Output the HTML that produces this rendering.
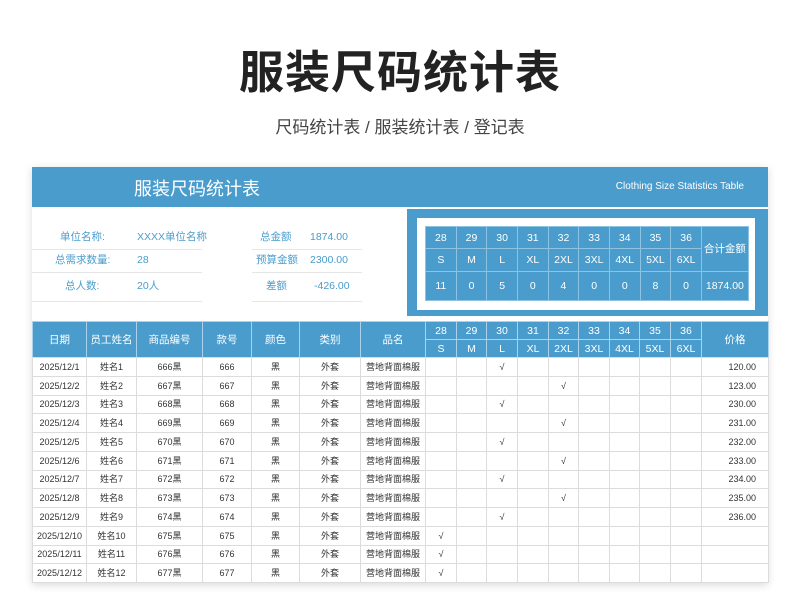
<!DOCTYPE html>
<html><head><meta charset="utf-8"><style>
*{margin:0;padding:0;box-sizing:border-box}
body{width:800px;height:613px;background:#fff;font-family:"Liberation Sans","Noto Sans CJK SC",sans-serif;position:relative;overflow:hidden}
.t{position:absolute;left:0;width:800px;text-align:center}
#card{position:absolute;left:32px;top:167px;width:736px;height:416px;background:#fff;box-shadow:0 2px 8px rgba(0,0,0,.15)}
#hd{position:absolute;left:0;top:0;width:736px;height:40px;background:#4a9ccd;color:#fff}
.info{position:absolute;font-size:10.5px;color:#4a9ccd;line-height:14px}
table{border-collapse:collapse;table-layout:fixed;position:absolute}
td{text-align:center;overflow:hidden;white-space:nowrap;line-height:12px}
#st td{border:1px solid #8cc3e3;color:#fff;background:#4a9ccd;font-size:10.5px}
#mh td{border:1px solid #a9d2ec;color:#fff;background:#4a9ccd;font-size:10.5px}
#bd td{border:1px solid #dcdcdc;color:#333;font-size:9px;height:18.75px}
</style></head><body>
<div class="t" style="top:36px;font-size:45px;font-weight:bold;color:#222;letter-spacing:1px">服装尺码统计表</div>
<div class="t" style="top:113px;font-size:17px;color:#444">尺码统计表 / 服装统计表 / 登记表</div>
<div id="card">
<div id="hd"><div style="position:absolute;left:102px;top:8px;font-size:18px">服装尺码统计表</div><div style="position:absolute;right:24px;top:14px;font-size:10px">Clothing Size Statistics Table</div></div>
<div style="position:absolute;left:0;top:82px;width:170px;border-top:1px solid #e6e6e6"></div>
<div style="position:absolute;left:0;top:105px;width:170px;border-top:1px solid #e6e6e6"></div>
<div style="position:absolute;left:0;top:134px;width:170px;border-top:1px solid #e6e6e6"></div>
<div style="position:absolute;left:220px;top:82px;width:110px;border-top:1px solid #e6e6e6"></div>
<div style="position:absolute;left:220px;top:105px;width:110px;border-top:1px solid #e6e6e6"></div>
<div style="position:absolute;left:220px;top:134px;width:110px;border-top:1px solid #e6e6e6"></div>
<div class="info" style="left:28px;top:63px">单位名称:</div><div class="info" style="left:105px;top:63px">XXXX单位名称</div>
<div class="info" style="left:23px;top:86px">总需求数量:</div><div class="info" style="left:105px;top:86px">28</div>
<div class="info" style="left:33px;top:112px">总人数:</div><div class="info" style="left:105px;top:112px">20人</div>
<div class="info" style="left:228px;top:63px">总金额</div><div class="info" style="left:278px;top:63px">1874.00</div>
<div class="info" style="left:224px;top:86px">预算金额</div><div class="info" style="left:278px;top:86px">2300.00</div>
<div class="info" style="left:234px;top:112px">差额</div><div class="info" style="left:282px;top:112px">-426.00</div>
<div style="position:absolute;left:375px;top:42px;width:361px;height:107px;background:#4a9ccd"></div>
<div style="position:absolute;left:385px;top:51px;width:338px;height:92px;background:#fff"></div>
<table id="st" style="left:393px;top:59px;width:323px">
<colgroup><col span="9" style="width:30.67px"><col style="width:47px"></colgroup>
<tr style="height:22px"><td>28</td><td>29</td><td>30</td><td>31</td><td>32</td><td>33</td><td>34</td><td>35</td><td>36</td><td rowspan="2">合计金额</td></tr>
<tr style="height:23px"><td>S</td><td>M</td><td>L</td><td>XL</td><td>2XL</td><td>3XL</td><td>4XL</td><td>5XL</td><td>6XL</td></tr>
<tr style="height:29px"><td>11</td><td>0</td><td>5</td><td>0</td><td>4</td><td>0</td><td>0</td><td>8</td><td>0</td><td>1874.00</td></tr>
</table>
<table id="mh" style="left:0;top:154px;width:736px">
<colgroup><col style="width:54px"><col style="width:50px"><col style="width:66px"><col style="width:49px"><col style="width:48px"><col style="width:61px"><col style="width:65px"><col style="width:31px"><col style="width:30px"><col style="width:31px"><col style="width:31px"><col style="width:30px"><col style="width:31px"><col style="width:30px"><col style="width:31px"><col style="width:31px"><col style="width:67px"></colgroup>
<tr style="height:18px"><td rowspan="2">日期</td><td rowspan="2">员工姓名</td><td rowspan="2">商品编号</td><td rowspan="2">款号</td><td rowspan="2">颜色</td><td rowspan="2">类别</td><td rowspan="2">品名</td><td>28</td><td>29</td><td>30</td><td>31</td><td>32</td><td>33</td><td>34</td><td>35</td><td>36</td><td rowspan="2">价格</td></tr>
<tr style="height:18px"><td>S</td><td>M</td><td>L</td><td>XL</td><td>2XL</td><td>3XL</td><td>4XL</td><td>5XL</td><td>6XL</td></tr>
</table>
<table id="bd" style="left:0;top:190px;width:736px">
<colgroup><col style="width:54px"><col style="width:50px"><col style="width:66px"><col style="width:49px"><col style="width:48px"><col style="width:61px"><col style="width:65px"><col style="width:31px"><col style="width:30px"><col style="width:31px"><col style="width:31px"><col style="width:30px"><col style="width:31px"><col style="width:30px"><col style="width:31px"><col style="width:31px"><col style="width:67px"></colgroup>
<tbody id="rows"></tbody>
</table>
</div>
<script>
var h='';
for(var i=1;i<=12;i++){
var c=i>=10?0:(i%2?2:4);
var price=['120.00','123.00','230.00','231.00','232.00','233.00','234.00','235.00','236.00','','',''][i-1];
h+='<tr><td>2025/12/'+i+'</td><td>姓名'+i+'</td><td>'+(665+i)+'黑</td><td>'+(665+i)+'</td><td>黑</td><td>外套</td><td>营地背面棉服</td>';
for(var k=0;k<9;k++)h+='<td>'+(k==c?'√':'')+'</td>';
h+='<td style="text-align:right;padding-right:12px">'+price+'</td></tr>';
}
document.getElementById('rows').innerHTML=h;
</script>
</body></html>
